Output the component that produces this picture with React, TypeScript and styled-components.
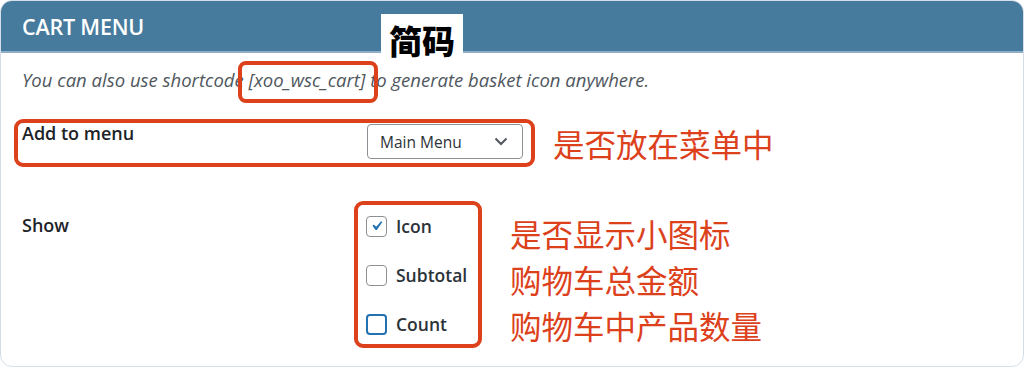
import styled, { createGlobalStyle } from 'styled-components';

const RED = '#dc411c';

const GlobalStyle = createGlobalStyle`
  html, body {
    margin: 0;
    padding: 0;
    background: #fff;
  }
  body {
    font-family: "Open Sans", "Noto Sans CJK SC", sans-serif;
    color: #1d2327;
  }
`;

const Card = styled.div`
  position: relative;
  box-sizing: border-box;
  width: 1024px;
  height: 367px;
  border: 1px solid #d3dee8;
  border-radius: 12px;
  overflow: hidden;
  background: #fff;
`;

const Header = styled.div`
  display: flex;
  align-items: center;
  height: 50px;
  padding-left: 21px;
  background: #467b9e;
  border-bottom: 2px solid #8eafc6;
  color: #fff;
  font-size: 21.5px;
  font-weight: 600;
  letter-spacing: -0.2px;
`;

const Tag = styled.div`
  position: absolute;
  left: 380px;
  top: 13px;
  width: 82px;
  height: 46px;
  display: flex;
  align-items: center;
  justify-content: center;
  padding-top: 6px;
  box-sizing: border-box;
  background: #fff;
  color: #000;
  font-family: "Noto Sans CJK SC", sans-serif;
  font-size: 33px;
  font-weight: 900;
`;

const Body = styled.div`
  padding-left: 21px;
`;

const Desc = styled.p`
  margin: 17px 0 0;
  font-size: 18.5px;
  line-height: 20px;
  font-style: italic;
  color: #50575e;
`;

const Code = styled.span`
  position: relative;
  display: inline-block;
  &::after {
    content: '';
    position: absolute;
    top: -9px;
    bottom: -13px;
    left: -11px;
    right: -13px;
    border: 4px solid ${RED};
    border-radius: 8px;
  }
`;

const Row = styled.div<{ $top: number; $align: string }>`
  display: flex;
  align-items: ${({ $align }) => $align};
  margin-top: ${({ $top }) => $top}px;
`;

const MenuBox = styled.div`
  display: flex;
  align-items: flex-start;
  box-sizing: border-box;
  width: 521px;
  height: 48px;
  margin-left: -8px;
  padding: 1px 8px 0 4px;
  border: 4px solid ${RED};
  border-radius: 9px;
`;

const Label = styled.div<{ $width: number; $top: number }>`
  width: ${({ $width }) => $width}px;
  flex-shrink: 0;
  margin-top: ${({ $top }) => $top}px;
  font-size: 18px;
  line-height: 22px;
  font-weight: 600;
  color: #1d2327;
`;

const Select = styled.div`
  display: flex;
  align-items: center;
  justify-content: space-between;
  box-sizing: border-box;
  width: 156px;
  height: 35px;
  padding: 0 14px 0 12px;
  border: 1px solid #8c8f94;
  border-radius: 4px;
  font-size: 15.5px;
  color: #2c3338;
`;

const Note = styled.div<{ $left: number; $top?: number }>`
  margin-left: ${({ $left }) => $left}px;
  margin-top: ${({ $top }) => $top ?? 0}px;
  font-family: "Noto Sans CJK SC", sans-serif;
  font-size: 31.5px;
  line-height: 46px;
  color: ${RED};
  white-space: nowrap;
`;

const Group = styled.div`
  display: flex;
  flex-direction: column;
  gap: 19px;
  box-sizing: border-box;
  width: 128px;
  height: 147px;
  padding: 6px 0 0 8px;
  border: 4px solid ${RED};
  border-radius: 9px;
`;

const Item = styled.div`
  display: flex;
  align-items: center;
  gap: 9px;
  height: 30px;
  font-size: 17.5px;
  font-weight: 600;
  color: #2c3338;
`;

const Box = styled.div<{ $focus?: boolean }>`
  box-sizing: border-box;
  width: 21px;
  height: 21px;
  border: ${({ $focus }) => ($focus ? '2px solid #2271b1' : '1px solid #8c8f94')};
  border-radius: 4px;
  background: #fff;
  display: flex;
  align-items: center;
  justify-content: center;
`;

function Check({ checked, focus, label }: { checked?: boolean; focus?: boolean; label: string }) {
  return (
    <Item>
      <Box $focus={focus}>
        {checked && (
          <svg width="22" height="22" viewBox="0 0 20 20">
            <path d="M14.83 4.89l1.34.94-5.81 8.38H9.02L5.78 9.67l1.34-1.25 2.57 2.4z" fill="#2271b1" />
          </svg>
        )}
      </Box>
      {label}
    </Item>
  );
}

export default function App() {
  return (
    <Card>
      <GlobalStyle />
      <Header>CART MENU</Header>
      <Tag>简码</Tag>
      <Body>
        <Desc>
          You can also use shortcode <Code>[xoo_wsc_cart]</Code> to generate basket icon anywhere.
        </Desc>
        <Row $top={29} $align="center">
          <MenuBox>
            <Label $width={345} $top={-2}>Add to menu</Label>
            <Select>
              Main Menu
              <svg width="14" height="9" viewBox="0 0 14 9">
                <polyline points="1.5,1.5 7,7 12.5,1.5" fill="none" stroke="#50575e" strokeWidth="2" />
              </svg>
            </Select>
          </MenuBox>
          <Note $left={18}>是否放在菜单中</Note>
        </Row>
        <Row $top={34} $align="flex-start">
          <Label $width={332} $top={13}>Show</Label>
          <Group>
            <Check checked label="Icon" />
            <Check label="Subtotal" />
            <Check focus label="Count" />
          </Group>
          <Note $left={28} $top={9}>
            是否显示小图标
            <br />
            购物车总金额
            <br />
            购物车中产品数量
          </Note>
        </Row>
      </Body>
    </Card>
  );
}
